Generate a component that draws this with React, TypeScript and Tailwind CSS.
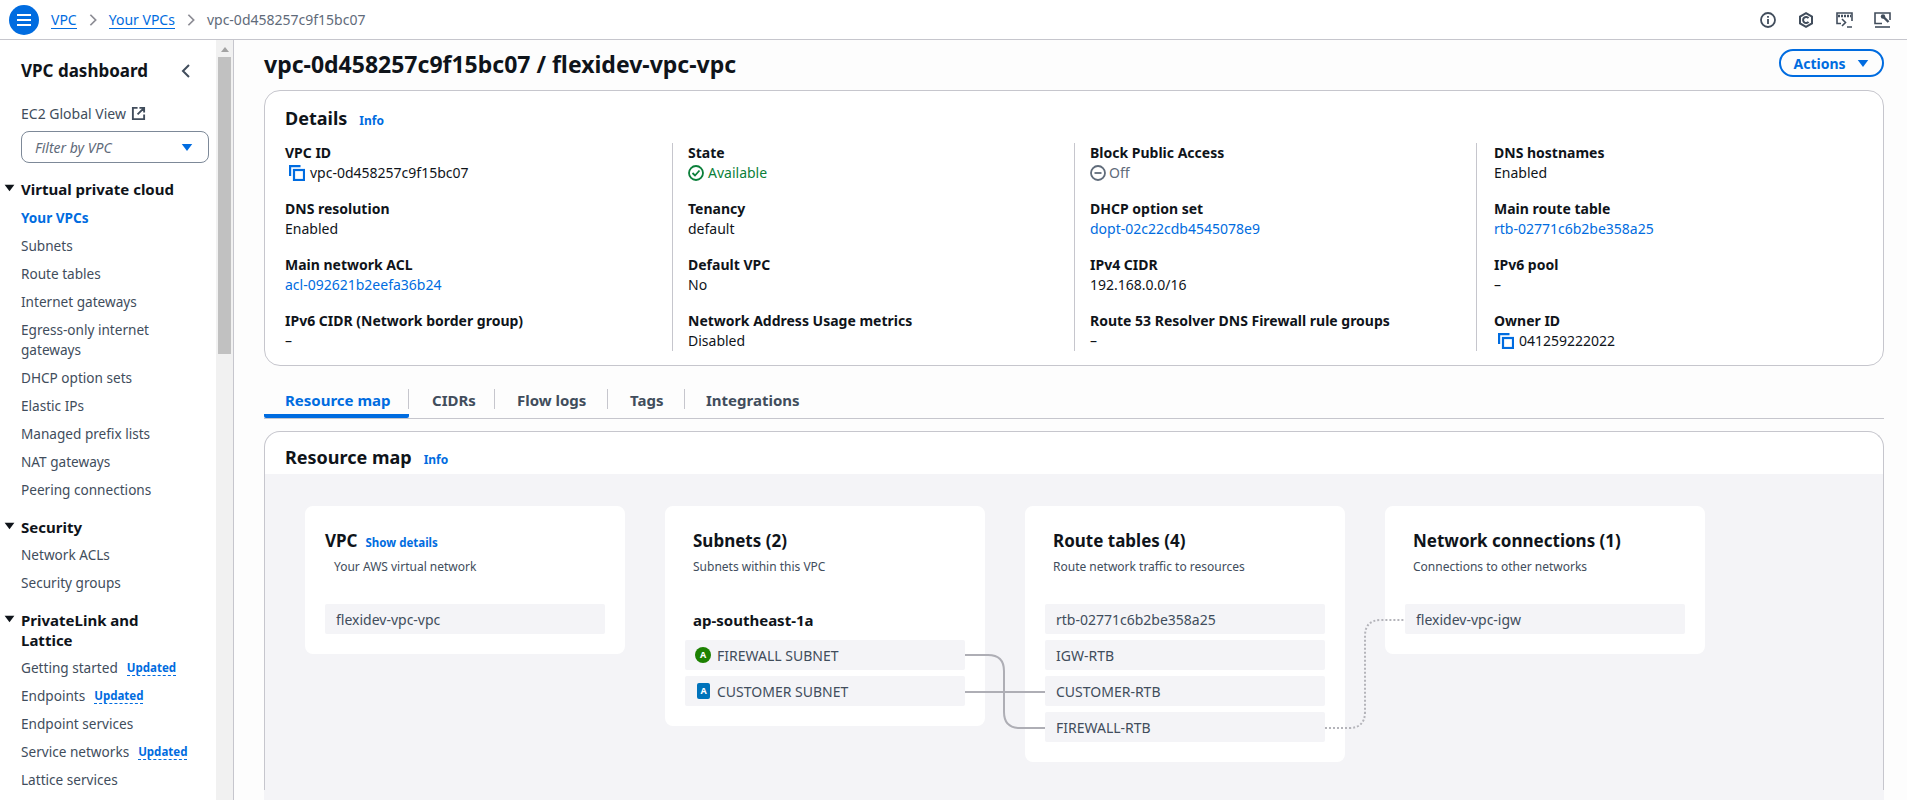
import React from "react";

const font = "font-['Noto_Sans','Open_Sans',sans-serif]";

function Caret({ className = "" }: { className?: string }) {
  return (
    <svg viewBox="0 0 16 16" className={className} fill="currentColor">
      <path d="M2 4.5h12L8 12.5z" />
    </svg>
  );
}

function Copy() {
  return (
    <svg viewBox="0 0 16 16" className="w-4 h-4 text-[#006ce0] shrink-0" fill="none" stroke="currentColor" strokeWidth="2.2">
      <path d="M1.100 11V1.100H11.500" />
      <rect x="5" y="5" width="10" height="10" />
    </svg>
  );
}

function Field({ label, children }: { label: string; children: React.ReactNode }) {
  return (
    <div className="h-[40px]">
      <div className="text-[14px] leading-[20px] font-bold text-[#0f141a]">{label}</div>
      <div className="text-[14px] leading-[20px] text-[#0f141a]">{children}</div>
    </div>
  );
}

const L = ({ children }: { children: React.ReactNode }) => <span className="text-[#006ce0]">{children}</span>;

function Col({ className, children }: { className: string; children: React.ReactNode }) {
  return <div className={`flex flex-col gap-[16px] ${className}`}>{children}</div>;
}

function NavItem({ children, badge, active }: { children: string; badge?: boolean; active?: boolean }) {
  return (
    <div className={`h-[28px] flex items-center pl-[21px] text-[13.6px] ${active ? "font-bold text-[#006ce0]" : "text-[#414d5c]"}`}>
      <span>{children}</span>
      {badge && <span className="ml-[9px] text-[11.5px] font-bold text-[#006ce0] border-b border-dashed border-[#006ce0] leading-[14px]">Updated</span>}
    </div>
  );
}

function NavHead({ children }: { children: React.ReactNode }) {
  return (
    <div className="flex pl-[3px] text-[15px] leading-[20px] font-bold text-[#0f141a]">
      <Caret className="w-[13px] h-[13px] mt-[2px] mr-[5px] shrink-0" />
      <span className="w-[185px]">{children}</span>
    </div>
  );
}

function Item({ children, icon }: { children: string; icon?: React.ReactNode }) {
  return (
    <div className="h-[30px] bg-[#f4f4f7] rounded-[2px] flex items-center px-[11px] gap-[6px] text-[14px] text-[#414d5c]">
      {icon}
      <span>{children}</span>
    </div>
  );
}

function MapCard({ title, sub, children, extra, headClass = "pl-[8px]", subClass = "pl-[8px]" }: { title: string; sub: string; children: React.ReactNode; extra?: React.ReactNode; headClass?: string; subClass?: string }) {
  return (
    <div className="w-[320px] bg-white rounded-[8px] px-[20px] pt-[23px] pb-[20px] self-start">
      <div className={`${headClass} flex items-baseline gap-[8px] h-[24px]`}>
        <span className="text-[17px] leading-[24px] font-bold text-[#0f141a]">{title}</span>
        {extra}
      </div>
      <div className={`${subClass} text-[12px] leading-[16px] mt-[6px] h-[45px] text-[#414d5c]`}>{sub}</div>
      {children}
    </div>
  );
}

function Chevron() {
  return (
    <svg viewBox="0 0 16 16" className="w-[14px] h-[14px] mx-[9px] text-[#8c8c94]" fill="none" stroke="currentColor" strokeWidth="2"><path d="M5 2l6 6-6 6" /></svg>
  );
}

function TabLabel({ w, pl, children, sep = true }: { w: string; pl: string; children: string; sep?: boolean }) {
  return (
    <div className={`${w} ${pl} relative pt-[2px]`}>
      <span className="leading-[24px]">{children}</span>
      {sep && <span className="absolute right-0 top-[3px] w-px h-[20px] bg-[#c6c6cd]" />}
    </div>
  );
}

export default function App() {
  return (
    <div className={`${font} w-[1907px] h-[800px] overflow-hidden bg-[#fdfdfd] flex flex-col`}>
      <header className="h-[40px] shrink-0 bg-white border-b border-[#c6c6cd] flex items-center pl-[9px] pr-[6px] text-[14px]">
        <div className="w-[30px] h-[30px] rounded-full bg-[#006ce0] flex flex-col items-center justify-center gap-[3px]">
          <span className="w-[14px] h-[2px] bg-white" />
          <span className="w-[14px] h-[2px] bg-white" />
          <span className="w-[14px] h-[2px] bg-white" />
        </div>
        <span className="ml-[12px] text-[#006ce0] border-b border-[#006ce0] leading-[17px]">VPC</span>
        <Chevron />
        <span className="text-[#006ce0] border-b border-[#006ce0] leading-[17px]">Your VPCs</span>
        <Chevron />
        <span className="text-[#5f6b7a]">vpc-0d458257c9f15bc07</span>
        <div className="ml-auto flex items-center text-[#414d5c]">
          <span className="w-[38px] flex justify-center">
            <svg viewBox="0 0 16 16" className="w-4 h-4" fill="none" stroke="currentColor" strokeWidth="1.800"><circle cx="8" cy="8" r="7" /><path d="M8 7V12M8 4v1.800" /></svg>
          </span>
          <span className="w-[38px] flex justify-center">
            <svg viewBox="0 0 16 16" className="w-4 h-4" fill="none" stroke="currentColor" strokeWidth="2"><path d="M8 1.200l6 3.400v6.800l-6 3.400-6-3.400V4.600z" /><path d="M10.500 6.200A3 3 0 1 0 10.500 9.800" /></svg>
          </span>
          <span className="w-[38px] flex justify-center">
            <svg viewBox="0 0 17 16" className="w-[17px] h-4" fill="none" stroke="currentColor" strokeWidth="1.600"><path d="M5 11.500H1V1h15v8" /><path d="M2 4h13" strokeDasharray="2 1" strokeWidth="2.400" /><path d="M6 7l3.500 3.500L6 14M11 15h5" /></svg>
          </span>
          <span className="w-[38px] flex justify-center">
            <svg viewBox="0 0 17 16" className="w-[17px] h-4" fill="none" stroke="currentColor" strokeWidth="1.600"><path d="M8 11.500H1V1h15v7" /><path d="M1 15h15" /><path d="M9.500 5l5 5" strokeWidth="2.400" /><circle cx="9" cy="4.500" r="2.200" fill="currentColor" stroke="none" /></svg>
          </span>
        </div>
      </header>

      <div className="flex-1 flex min-h-0">
        <aside className="w-[216px] shrink-0 bg-white pt-[17px]">
          <div className="flex items-center pl-[21px] pr-[22px] h-[28px]">
            <span className="text-[17px] font-bold text-[#0f141a]">VPC dashboard</span>
            <svg viewBox="0 0 16 16" className="ml-auto w-4 h-4 text-[#414d5c]" fill="none" stroke="currentColor" strokeWidth="2"><path d="M11 2L5 8l6 6" /></svg>
          </div>
          <div className="pl-[21px] mt-[17px] h-[22px] flex items-center gap-[5px] text-[14px] text-[#414d5c]">
            EC2 Global View
            <svg viewBox="0 0 16 16" className="w-[15px] h-[15px]" fill="none" stroke="currentColor" strokeWidth="2"><path d="M7 2H2v12h12V9M9 2h5v5M14 2L7 9" /></svg>
          </div>
          <div className="ml-[21px] mt-[7px] w-[188px] h-[32px] border border-[#7d8998] rounded-[8px] flex items-center pl-[13px] pr-[14px] text-[14px] italic text-[#5f6b7a]">
            Filter by VPC
            <Caret className="ml-auto w-[14px] h-[14px] text-[#006ce0]" />
          </div>
          <div className="mt-[16px]">
            <NavHead>Virtual private cloud</NavHead>
            <div className="mt-[5px]">
              <NavItem active>Your VPCs</NavItem>
              <NavItem>Subnets</NavItem>
              <NavItem>Route tables</NavItem>
              <NavItem>Internet gateways</NavItem>
              <div className="pl-[21px] pr-[10px] py-[4px] text-[13.6px] leading-[20px] text-[#414d5c]">Egress-only internet<br />gateways</div>
              <NavItem>DHCP option sets</NavItem>
              <NavItem>Elastic IPs</NavItem>
              <NavItem>Managed prefix lists</NavItem>
              <NavItem>NAT gateways</NavItem>
              <NavItem>Peering connections</NavItem>
            </div>
          </div>
          <div className="mt-[13px]">
            <NavHead>Security</NavHead>
            <div className="mt-[4px]">
              <NavItem>Network ACLs</NavItem>
              <NavItem>Security groups</NavItem>
            </div>
          </div>
          <div className="mt-[13px]">
            <NavHead>PrivateLink and<br />Lattice</NavHead>
            <div className="mt-[4px]">
              <NavItem badge>Getting started</NavItem>
              <NavItem badge>Endpoints</NavItem>
              <NavItem>Endpoint services</NavItem>
              <NavItem badge>Service networks</NavItem>
              <NavItem>Lattice services</NavItem>
            </div>
          </div>
        </aside>

        <div className="w-[17px] shrink-0 bg-[#f1f1f1] flex flex-col items-center">
          <svg viewBox="0 0 10 6" className="w-[8px] h-[5px] mt-[7px] text-[#a3a3a3]" fill="currentColor"><path d="M5 0l5 6H0z" /></svg>
          <div className="w-[13px] h-[297px] bg-[#c1c1c1] mt-[5px]" />
        </div>

        <main className="flex-1 border-l border-[#c6c6cd] pl-[30px] pr-[23px] min-w-0">
          <div className="h-[50px] flex items-center justify-between">
            <h1 className="text-[23px] font-bold text-[#0f141a] leading-[30px] mt-[-2px]">vpc-0d458257c9f15bc07 / flexidev-vpc-vpc</h1>
            <div className="h-[28px] w-[105px] rounded-full border-2 border-[#006ce0] flex items-center justify-center gap-[10px] text-[14px] font-bold text-[#006ce0] mt-[-4px]">
              Actions
              <Caret className="w-[14px] h-[14px]" />
            </div>
          </div>

          <section className="h-[276px] bg-white border border-[#c6c6cd] rounded-[16px] pt-[14px] pl-[20px]">
            <div className="flex items-baseline gap-[12px] h-[32px]">
              <span className="text-[18px] font-bold text-[#0f141a]">Details</span>
              <span className="text-[12px] font-bold text-[#006ce0]">Info</span>
            </div>
            <div className="flex mt-[6px] h-[208px]">
              <Col className="w-[388px] border-r border-[#c6c6cd]">
                <Field label="VPC ID"><span className="flex items-center gap-[5px] pl-[4px]"><Copy />vpc-0d458257c9f15bc07</span></Field>
                <Field label="DNS resolution">Enabled</Field>
                <Field label="Main network ACL"><L>acl-092621b2eefa36b24</L></Field>
                <Field label="IPv6 CIDR (Network border group)">–</Field>
              </Col>
              <Col className="w-[402px] pl-[15px] border-r border-[#c6c6cd]">
                <Field label="State">
                  <span className="flex items-center gap-[4px] text-[#0b7f3a]">
                    <svg viewBox="0 0 16 16" className="w-4 h-4" fill="none" stroke="currentColor" strokeWidth="1.800"><circle cx="8" cy="8" r="7" /><path d="M4.500 8l2.500 2.500 4.500-5" /></svg>
                    Available
                  </span>
                </Field>
                <Field label="Tenancy">default</Field>
                <Field label="Default VPC">No</Field>
                <Field label="Network Address Usage metrics">Disabled</Field>
              </Col>
              <Col className="w-[402px] pl-[15px] border-r border-[#c6c6cd]">
                <Field label="Block Public Access">
                  <span className="flex items-center gap-[3px] text-[#5f6b7a]">
                    <svg viewBox="0 0 16 16" className="w-4 h-4" fill="none" stroke="currentColor" strokeWidth="1.800"><circle cx="8" cy="8" r="7" /><path d="M4.500 8h7" /></svg>
                    Off
                  </span>
                </Field>
                <Field label="DHCP option set"><L>dopt-02c22cdb4545078e9</L></Field>
                <Field label="IPv4 CIDR">192.168.0.0/16</Field>
                <Field label="Route 53 Resolver DNS Firewall rule groups">–</Field>
              </Col>
              <Col className="flex-1 pl-[17px]">
                <Field label="DNS hostnames">Enabled</Field>
                <Field label="Main route table"><L>rtb-02771c6b2be358a25</L></Field>
                <Field label="IPv6 pool">–</Field>
                <Field label="Owner ID"><span className="flex items-center gap-[5px] pl-[4px]"><Copy />041259222022</span></Field>
              </Col>
            </div>
          </section>

          <nav className="mt-[20px] h-[33px] border-b border-[#c6c6cd] flex text-[15px] font-bold text-[#414d5c]">
            <div className="w-[145px] pl-[21px] h-[32px] border-b-[4px] border-[#006ce0] rounded-b-[2px] text-[#006ce0] relative pt-[2px]">
              <span className="leading-[24px]">Resource map</span>
              <span className="absolute right-0 top-[3px] w-px h-[20px] bg-[#c6c6cd]" />
            </div>
            <TabLabel w="w-[86px]" pl="pl-[23px]">CIDRs</TabLabel>
            <TabLabel w="w-[113px]" pl="pl-[22px]">Flow logs</TabLabel>
            <TabLabel w="w-[77px]" pl="pl-[22px]">Tags</TabLabel>
            <TabLabel w="w-auto" pl="pl-[21px]" sep={false}>Integrations</TabLabel>
          </nav>

          <section className="mt-[12px] h-[359px] bg-white border border-[#c6c6cd] border-b-0 rounded-t-[16px] overflow-hidden flex flex-col">
            <div className="h-[42px] shrink-0 pl-[20px] pt-[12px] flex items-baseline gap-[12px]">
              <span className="text-[18px] font-bold text-[#0f141a]">Resource map</span>
              <span className="text-[12px] font-bold text-[#006ce0]">Info</span>
            </div>
            <div className="flex-1 bg-[#f4f4f7] pt-[32px] pl-[40px] relative flex gap-[40px]">
              <MapCard title="VPC" sub="Your AWS virtual network" headClass="" subClass="pl-[9px]" extra={<span className="text-[11.5px] font-bold text-[#006ce0]">Show details</span>}>
                <Item>flexidev-vpc-vpc</Item>
              </MapCard>
              <MapCard title="Subnets (2)" sub="Subnets within this VPC">
                <div className="pl-[8px] text-[15px] font-bold text-[#0f141a] leading-[24px] h-[36px] pt-[4px]">ap-southeast-1a</div>
                <div className="flex flex-col gap-[6px]">
                  <Item icon={<span className="w-[16px] h-[16px] -ml-px rounded-full bg-[#1d8102] text-white text-[9px] font-bold flex items-center justify-center">A</span>}>FIREWALL SUBNET</Item>
                  <Item icon={<span className="w-[13px] h-[16px] rounded-[2px] bg-[#0073bb] text-white text-[9px] font-bold flex items-center justify-center ml-px mr-px">A</span>}>CUSTOMER SUBNET</Item>
                </div>
              </MapCard>
              <MapCard title="Route tables (4)" sub="Route network traffic to resources">
                <div className="flex flex-col gap-[6px]">
                  <Item>rtb-02771c6b2be358a25</Item>
                  <Item>IGW-RTB</Item>
                  <Item>CUSTOMER-RTB</Item>
                  <Item>FIREWALL-RTB</Item>
                </div>
              </MapCard>
              <MapCard title="Network connections (1)" sub="Connections to other networks">
                <Item>flexidev-vpc-igw</Item>
              </MapCard>
              <svg className="absolute left-0 top-0 w-full h-full pointer-events-none" fill="none">
                <path d="M700 181H723Q739 181 739 197V238Q739 254 755 254H780" stroke="#aeaeb5" strokeWidth="2" />
                <path d="M700 218H780" stroke="#aeaeb5" strokeWidth="2" />
                <path d="M1060 254H1084Q1100 254 1100 238V162Q1100 146 1116 146H1140" stroke="#b4b4ba" strokeWidth="2" strokeDasharray="2 2" />
              </svg>
            </div>
          </section>
          <div className="h-[10px] bg-[#f4f4f7]" />
        </main>
      </div>
    </div>
  );
}
